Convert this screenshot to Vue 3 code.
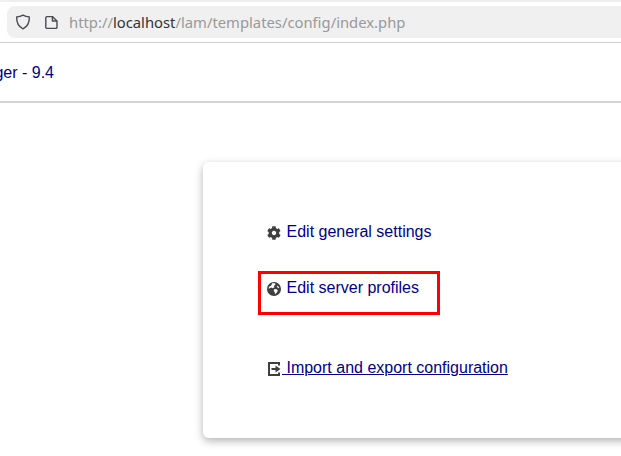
<script setup>
const urlHost = 'localhost'
</script>

<template>
  <div class="page">
    <div class="browser">
      <div class="urlbox">
        <svg class="tool-icon" viewBox="0 0 16 16" width="16" height="16" fill="none" stroke="#4a4a4f" stroke-width="1.4" stroke-linejoin="round">
          <path d="M8 1.2 C10 2.3 12 2.8 14.3 2.9 C14.5 8.5 12.6 12.5 8 14.8 C3.4 12.5 1.5 8.5 1.7 2.9 C4 2.8 6 2.3 8 1.2 Z" />
        </svg>
        <svg class="tool-icon page-icon" viewBox="0 0 16 16" width="16" height="16" fill="none" stroke="#4a4a4f" stroke-width="1.4" stroke-linejoin="round">
          <path d="M1.8 3.8 A1.2 1.2 0 0 1 3 2.6 H8.4 L13 7 V13 A1.2 1.2 0 0 1 11.8 14.4 H3 A1.2 1.2 0 0 1 1.8 13 Z" />
          <path d="M8.4 2.6 V7 H13" />
        </svg>
        <span class="url">http://<b>{{ urlHost }}</b>/lam/templates/config/index.php</span>
      </div>
    </div>

    <header class="header">
      <div class="title-clip"><a class="title">LDAP Account Manager - 9.4</a></div>
    </header>

    <main class="main">
      <section class="card">
        <div class="row row-general">
          <svg class="icon" viewBox="0 0 512 512" width="14" height="14">
            <path fill="#3f3f3f" d="M487 316l-43-25c4-23 4-47 0-70l43-25c5-3 7-9 6-14-11-36-30-68-55-95-4-4-10-5-15-2l-43 25c-18-16-39-28-61-36V24c0-6-4-11-9-12-37-8-75-8-111 0-6 1-10 6-10 12v50c-22 8-43 20-61 36L85 85c-5-3-11-2-15 2-25 27-44 59-55 95-2 5 1 11 5 14l43 25c-4 23-4 47 0 70l-43 25c-5 3-7 9-5 14 11 36 30 68 55 95 4 4 10 5 15 2l43-25c18 16 39 28 61 36v50c0 6 4 11 10 12 37 8 75 8 111 0 5-1 9-6 9-12v-50c22-8 43-20 61-36l43 25c5 3 11 2 15-2 25-27 44-59 55-95 1-5-1-11-6-14zM256 336c-44 0-80-36-80-80s36-80 80-80 80 36 80 80-36 80-80 80z" />
          </svg>
          <a class="link">Edit general settings</a>
        </div>

        <div class="row row-server">
          <svg class="icon" viewBox="0 0 16 16" width="14" height="14">
            <circle cx="8" cy="8" r="8" fill="#3f3f3f" />
            <path fill="#fff" d="M6 1.4 L9.2 1.4 L9.6 3 L8 4.6 L8.4 6 L6.6 7 L5 6.2 L2 7.6 L2.4 5.4 L4.6 4.2 Z M8.6 8 L11.2 8.4 L12.4 10 L11 12.4 L9.2 14 L8.8 11.6 L7.6 10 Z M12.2 4 L14 6.6 L12.8 7 L11.4 5.4 Z" />
          </svg>
          <a class="link">Edit server profiles</a>
          <div class="annotation"></div>
        </div>

        <div class="row row-import">
          <a class="link underlined">
            <svg class="icon import-icon" viewBox="0 0 13 14" width="13" height="14" fill="none">
              <path stroke="#3f3f3f" stroke-width="2" d="M11 3.5 V1 H1 V13 H11 V10.5" />
              <path fill="#3f3f3f" d="M3.5 6 H7.5 V3.5 L12.5 7 L7.5 10.5 V8 H3.5 Z" />
            </svg>
            <span class="import-text"> Import and export configuration</span>
          </a>
        </div>
      </section>
    </main>
  </div>
</template>

<style scoped>
.page {
  width: 621px;
  height: 456px;
  overflow: hidden;
  background: #fff;
  font-family: "Liberation Sans", Arial, sans-serif;
}
.browser {
  box-sizing: border-box;
  height: 43px;
  padding: 6px 0 0 7px;
  border-bottom: 1px solid #cfcfcf;
  background: linear-gradient(#efefef 0, #efefef 2px, #fff 2px);
}
.urlbox {
  height: 32px;
  background: #f0f0f0;
  border-radius: 8px 0 0 8px;
  display: flex;
  align-items: center;
  padding-left: 8px;
}
.tool-icon { flex: none; }
.page-icon { margin-left: 13px; }
.url {
  margin-left: 9px;
  font-family: "Noto Sans", sans-serif;
  font-size: 14.8px;
  color: #999;
  white-space: nowrap;
}
.url b {
  font-weight: 400;
  color: #333;
}
.header {
  height: 60px;
  border-bottom: 2px solid #d4d4d4;
  box-sizing: border-box;
  display: flex;
  align-items: center;
}
.title-clip {
  width: 54px;
  display: flex;
  justify-content: flex-end;
  overflow: hidden;
  margin-top: 1px;
}
.title {
  flex: none;
  font-size: 16px;
  color: #00008b;
  white-space: nowrap;
}
.main {
  padding: 59px 0 0 203px;
}
.card {
  width: 600px;
  height: 276px;
  box-sizing: border-box;
  background: #fff;
  border-radius: 6px;
  padding: 61px 0 0 64px;
  box-shadow: 0 3px 8px rgba(0, 0, 0, 0.3);
  display: flex;
  flex-direction: column;
}
.row {
  display: flex;
  align-items: center;
  height: 18px;
  white-space: nowrap;
  position: relative;
}
.row-server { margin-top: 38px; }
.row-import { margin-top: 62px; }
.icon { flex: none; margin-right: 5.5px; margin-top: 2px; }
.link {
  font-size: 16px;
  line-height: 18px;
  color: #00008b;
}
.underlined {
  text-decoration: underline;
  display: flex;
  align-items: center;
}
.import-icon { margin: 2px 1px 0 1px; }
.import-text { white-space: pre; }
.annotation {
  position: absolute;
  left: -9px;
  top: -8px;
  width: 182px;
  height: 44px;
  box-sizing: border-box;
  border: 3px solid #f00;
}
</style>
